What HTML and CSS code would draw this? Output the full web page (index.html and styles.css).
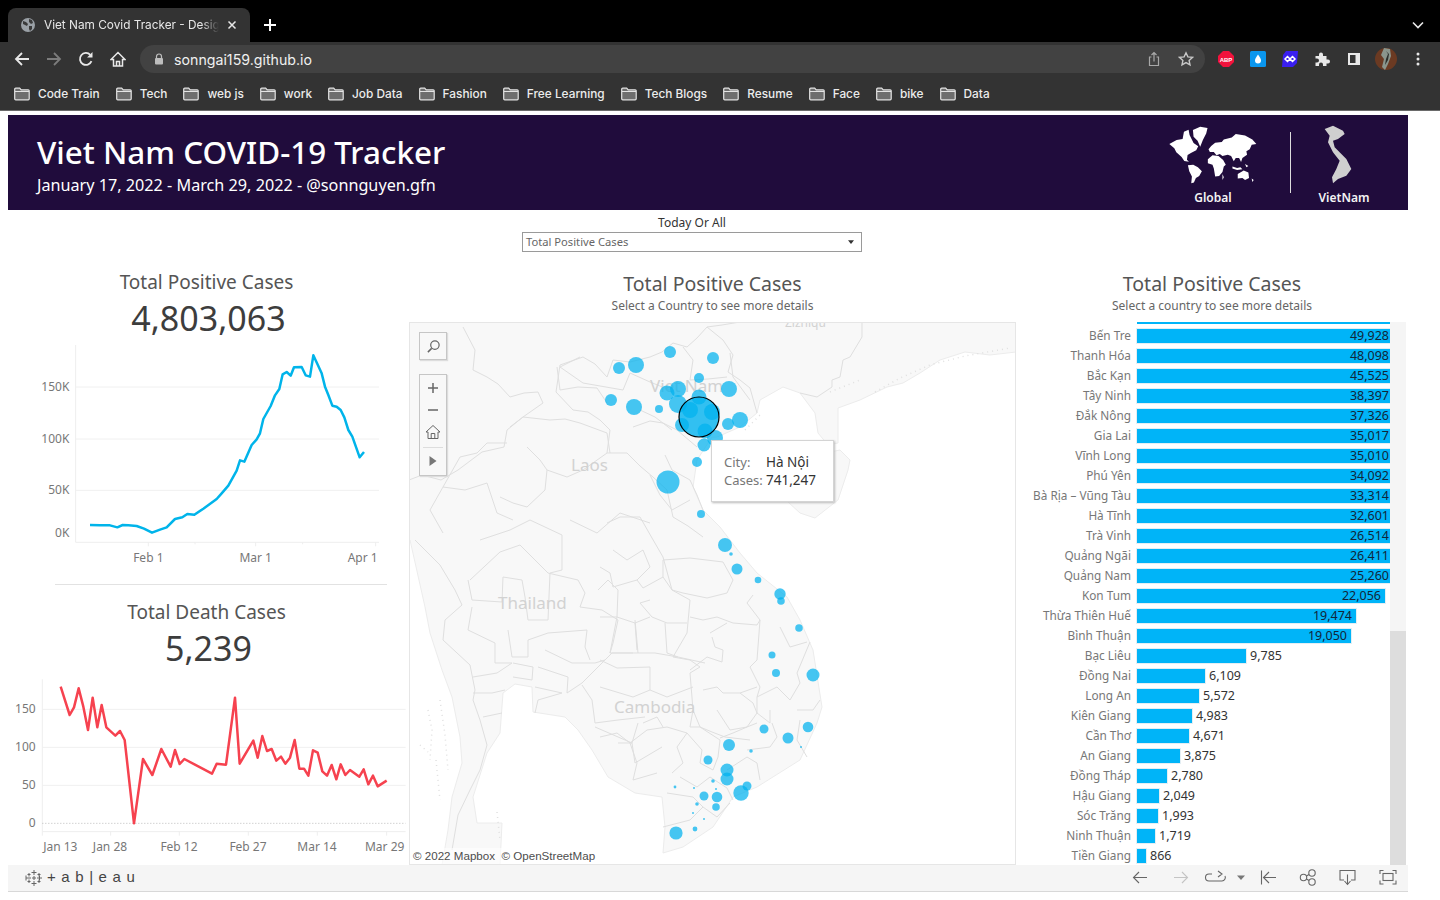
FILE: index.html
```html
<!DOCTYPE html>
<html lang="en">
<head>
<meta charset="utf-8">
<title>Viet Nam Covid Tracker</title>
<link rel="stylesheet" href="styles.css">
</head>
<body>
<header class="chrome">
  <div class="tabstrip">
    <div class="tab">
      <svg class="tab-globe" viewBox="0 0 16 16"><circle cx="8" cy="8" r="7" fill="#9aa0a6"/><path d="M3 4l3 1 2 2-1 2-2-1-2-1zM9 2l3 1 1 3-2 1-2-2zM9 9l3 0 0 3-2 2-1-2z" fill="#3a3a3a"/></svg>
      <span class="tab-title">Viet Nam Covid Tracker - Design</span>
      <svg class="tab-x" viewBox="0 0 10 10"><path d="M1.5 1.5l7 7M8.5 1.5l-7 7" stroke="#e8e8e8" stroke-width="1.5"/></svg>
    </div>
    <svg class="newtab" viewBox="0 0 14 14"><path d="M7 1v12M1 7h12" stroke="#fff" stroke-width="2"/></svg>
    <svg class="tabmenu" viewBox="0 0 12 8"><path d="M1 1.5l5 5 5-5" fill="none" stroke="#e8e8e8" stroke-width="1.6"/></svg>
  </div>
  <div class="toolbar">
    <span class="navbtn"><svg viewBox="0 0 16 16"><path d="M15 8H2M8 2L2 8l6 6" fill="none" stroke="#e8e8e8" stroke-width="1.8"/></svg></span>
    <span class="navbtn"><svg viewBox="0 0 16 16"><path d="M1 8h13M8 2l6 6-6 6" fill="none" stroke="#7c7c7c" stroke-width="1.8"/></svg></span>
    <span class="navbtn"><svg viewBox="0 0 16 16"><path d="M13.5 10.2A6 6 0 1 1 12.3 3.8" fill="none" stroke="#e8e8e8" stroke-width="1.8"/><path d="M14.5 1v5.4H9.1z" fill="#e8e8e8"/></svg></span>
    <span class="navbtn"><svg viewBox="0 0 16 16"><path d="M8 1.500L1 8.500h2.500V15h9V8.500H15zM6.500 15v-4.500h3V15" fill="none" stroke="#e8e8e8" stroke-width="1.500"/></svg></span>
    <div class="omnibox">
      <svg class="lock" viewBox="0 0 10 12"><path d="M2.500 5V3.500a2.500 2.500 0 0 1 5 0V5" fill="none" stroke="#bdbdbd" stroke-width="1.200"/><rect x="1" y="5" width="8" height="6.500" rx="1" fill="#bdbdbd"/></svg>
      <span class="url">sonngai159.github.io</span>
      <svg class="omni-share" viewBox="0 0 12 16"><path d="M3.500 6H1.500v8.500h9V6H8.500M6 10.500V1.500M3.500 4L6 1.500 8.500 4" fill="none" stroke="#a8a8a8" stroke-width="1.200"/></svg>
      <svg class="omni-star" viewBox="0 0 16 16"><path d="M8 1.800l1.900 4.100 4.500.500-3.300 3 .9 4.400L8 11.600l-4 2.200.9-4.400-3.300-3 4.500-.500z" fill="none" stroke="#c8c8c8" stroke-width="1.400"/></svg>
    </div>
    <div class="extensions">
      <span class="navbtn"><svg viewBox="0 0 16 16"><path d="M5 0h6l5 5v6l-5 5H5l-5-5V5z" fill="#f2123c"/><text x="8" y="10.500" class="abp">ABP</text></svg></span>
      <span class="navbtn"><svg viewBox="0 0 16 16"><rect width="16" height="16" rx="1.500" fill="#0a96ee"/><path d="M8 3.500c2 3 3 4.500 3 6a3 3 0 0 1-6 0c0-1.500 1-3 3-6z" fill="#fff"/></svg></span>
      <span class="navbtn"><svg viewBox="0 0 16 16"><path d="M4 0h12l-1 12-4 4H0l1-12z" fill="#3a1ff0"/><path d="M3 8l2.500-2.500L8 8l2.500 2.500L13 8l-2.500-2.500L8 8l-2.500 2.500z" fill="none" stroke="#fff" stroke-width="1.500"/></svg></span>
      <span class="navbtn"><svg viewBox="0 0 16 16"><path d="M1.500 5H5V3.500a2 2 0 0 1 4 0V5h3.500v3.500H14a2 2 0 0 1 0 4h-1.500V15H9v-1.500a2 2 0 0 0-4 0V15H1.500v-3.500H3a2 2 0 0 0 0-4H1.500z" fill="#e8e8e8"/></svg></span>
      <span class="navbtn"><svg viewBox="0 0 16 16"><path d="M2 2h12v12H2z" fill="#e8e8e8"/><path d="M4 4h5.500v8H4z" fill="#333"/></svg></span>
      <span class="navbtn"><svg class="avatar" viewBox="0 0 22 22"><circle cx="11" cy="11" r="11" fill="#6b3a22"/><path d="M9 0l6 1 1 7-3 8-3 6-3-3 2-8-3-4z" fill="#8a958c"/><path d="M11 3l2 3-2 5-1 6 3-5 1-6z" fill="#2b2f2b"/></svg></span>
      <span class="navbtn"><svg viewBox="0 0 16 16"><circle cx="8" cy="3" r="1.500" fill="#e8e8e8"/><circle cx="8" cy="8" r="1.500" fill="#e8e8e8"/><circle cx="8" cy="13" r="1.500" fill="#e8e8e8"/></svg></span>
    </div>
  </div>
  <nav class="bookmarks">
    <a class="bm"><svg class="folder" viewBox="0 0 16 14"><path d="M.7 2.200A1 1 0 0 1 1.700 1.200h4l1.500 1.600h7a1 1 0 0 1 1 1v8a1 1 0 0 1-1 1H1.700a1 1 0 0 1-1-1z" fill="#6e6e6e" stroke="#e4e4e4" stroke-width="1.200"/><path d="M1 4.500h14" stroke="#e4e4e4"/></svg>Code Train</a>
    <a class="bm"><svg class="folder" viewBox="0 0 16 14"><path d="M.7 2.200A1 1 0 0 1 1.700 1.200h4l1.500 1.600h7a1 1 0 0 1 1 1v8a1 1 0 0 1-1 1H1.700a1 1 0 0 1-1-1z" fill="#6e6e6e" stroke="#e4e4e4" stroke-width="1.200"/><path d="M1 4.500h14" stroke="#e4e4e4"/></svg>Tech</a>
    <a class="bm"><svg class="folder" viewBox="0 0 16 14"><path d="M.7 2.200A1 1 0 0 1 1.700 1.200h4l1.500 1.600h7a1 1 0 0 1 1 1v8a1 1 0 0 1-1 1H1.700a1 1 0 0 1-1-1z" fill="#6e6e6e" stroke="#e4e4e4" stroke-width="1.200"/><path d="M1 4.500h14" stroke="#e4e4e4"/></svg>web js</a>
    <a class="bm"><svg class="folder" viewBox="0 0 16 14"><path d="M.7 2.200A1 1 0 0 1 1.700 1.200h4l1.500 1.600h7a1 1 0 0 1 1 1v8a1 1 0 0 1-1 1H1.700a1 1 0 0 1-1-1z" fill="#6e6e6e" stroke="#e4e4e4" stroke-width="1.200"/><path d="M1 4.500h14" stroke="#e4e4e4"/></svg>work</a>
    <a class="bm"><svg class="folder" viewBox="0 0 16 14"><path d="M.7 2.200A1 1 0 0 1 1.700 1.200h4l1.500 1.600h7a1 1 0 0 1 1 1v8a1 1 0 0 1-1 1H1.700a1 1 0 0 1-1-1z" fill="#6e6e6e" stroke="#e4e4e4" stroke-width="1.200"/><path d="M1 4.500h14" stroke="#e4e4e4"/></svg>Job Data</a>
    <a class="bm"><svg class="folder" viewBox="0 0 16 14"><path d="M.7 2.200A1 1 0 0 1 1.700 1.200h4l1.500 1.600h7a1 1 0 0 1 1 1v8a1 1 0 0 1-1 1H1.700a1 1 0 0 1-1-1z" fill="#6e6e6e" stroke="#e4e4e4" stroke-width="1.200"/><path d="M1 4.500h14" stroke="#e4e4e4"/></svg>Fashion</a>
    <a class="bm"><svg class="folder" viewBox="0 0 16 14"><path d="M.7 2.200A1 1 0 0 1 1.700 1.200h4l1.500 1.600h7a1 1 0 0 1 1 1v8a1 1 0 0 1-1 1H1.700a1 1 0 0 1-1-1z" fill="#6e6e6e" stroke="#e4e4e4" stroke-width="1.200"/><path d="M1 4.500h14" stroke="#e4e4e4"/></svg>Free Learning</a>
    <a class="bm"><svg class="folder" viewBox="0 0 16 14"><path d="M.7 2.200A1 1 0 0 1 1.700 1.200h4l1.500 1.600h7a1 1 0 0 1 1 1v8a1 1 0 0 1-1 1H1.700a1 1 0 0 1-1-1z" fill="#6e6e6e" stroke="#e4e4e4" stroke-width="1.200"/><path d="M1 4.500h14" stroke="#e4e4e4"/></svg>Tech Blogs</a>
    <a class="bm"><svg class="folder" viewBox="0 0 16 14"><path d="M.7 2.200A1 1 0 0 1 1.700 1.200h4l1.500 1.600h7a1 1 0 0 1 1 1v8a1 1 0 0 1-1 1H1.700a1 1 0 0 1-1-1z" fill="#6e6e6e" stroke="#e4e4e4" stroke-width="1.200"/><path d="M1 4.500h14" stroke="#e4e4e4"/></svg>Resume</a>
    <a class="bm"><svg class="folder" viewBox="0 0 16 14"><path d="M.7 2.200A1 1 0 0 1 1.700 1.200h4l1.500 1.600h7a1 1 0 0 1 1 1v8a1 1 0 0 1-1 1H1.700a1 1 0 0 1-1-1z" fill="#6e6e6e" stroke="#e4e4e4" stroke-width="1.200"/><path d="M1 4.500h14" stroke="#e4e4e4"/></svg>Face</a>
    <a class="bm"><svg class="folder" viewBox="0 0 16 14"><path d="M.7 2.200A1 1 0 0 1 1.700 1.200h4l1.500 1.600h7a1 1 0 0 1 1 1v8a1 1 0 0 1-1 1H1.700a1 1 0 0 1-1-1z" fill="#6e6e6e" stroke="#e4e4e4" stroke-width="1.200"/><path d="M1 4.500h14" stroke="#e4e4e4"/></svg>bike</a>
    <a class="bm"><svg class="folder" viewBox="0 0 16 14"><path d="M.7 2.200A1 1 0 0 1 1.700 1.200h4l1.500 1.600h7a1 1 0 0 1 1 1v8a1 1 0 0 1-1 1H1.700a1 1 0 0 1-1-1z" fill="#6e6e6e" stroke="#e4e4e4" stroke-width="1.200"/><path d="M1 4.500h14" stroke="#e4e4e4"/></svg>Data</a>
  </nav>
</header>

<main class="dash">
  <section class="banner">
    <div class="banner-text">
      <h1 class="banner-title">Viet Nam COVID-19 Tracker</h1>
      <p class="banner-sub">January 17, 2022 - March 29, 2022 - @sonnguyen.gfn</p>
    </div>
    <div class="banner-nav">
      <div class="nav-item nav-global">
        <svg class="world" viewBox="205 40 280 180">
          <path d="M212 100l22-12 18-3 4-22 14-6 3 16 12 24 14 10-6 12-16 8-10 6-2 14 6 6-14-2-8-12-16-14-6-12z" fill="#fff"/>
          <path d="M283 58l22-10 22 4-4 16-10 20-8 20-8-18-12-12z" fill="#fff"/>
          <path d="M268 164l16-2 14 8 12 12-8 14-10 6-6 14-8 2 2-20-8-16z" fill="#fff"/>
          <path d="M328 146l14-12 18 2 14 12 8 14-6 6-4 16-10 12-12 2-4-24-4-12-14-4z" fill="#fff"/>
          <path d="M338 106l12-10 20-2 6-8 24-6 12-10 28 4 22 12 12 14-14 2-6 14-10 6 2 10-14 10-4 12-6-12-10 0-6 10-8-16-10-4-16 4-8-6-10 4-8-10-12 0-4-8z" fill="#fff"/>
          <path d="M418 190l18-10 14 6 2 16-12 6-8-6-14 2z" fill="#fff"/>
          <path d="M402 168l14 4 10-2 6 6-16 2-14-4z M440 160l10 6-6 4z M460 204l6 4-4 6z M372 190l4 10-4 8z" fill="#fff"/>
        </svg>
        <span class="nav-label">Global</span>
      </div>
      <div class="nav-rule"></div>
      <div class="nav-item nav-vn">
        <svg class="vnshape" viewBox="670 40 90 180">
          <path d="M675 55L700 45 730 60 735 70 715 85 700 90 705 110 740 145 755 175 740 195 715 205 700 218 697 200 710 175 720 150 700 125 685 95 690 75Z" fill="#cfcfcf"/>
        </svg>
        <span class="nav-label">VietNam</span>
      </div>
    </div>
  </section>

  <section class="filter">
    <label class="filter-label">Today Or All</label>
    <div class="filter-box">
      <span>Total Positive Cases</span>
      <svg class="filter-caret" viewBox="0 0 8 5"><path d="M0 0h8L4 5z" fill="#333"/></svg>
    </div>
  </section>

  <section class="columns">
    <div class="col-left">
      <h2 class="kpi-title">Total Positive Cases</h2>
      <div class="kpi-value">4,803,063</div>
      <svg class="chart chart-cases" viewBox="24 0 1203 720">
        <path class="grid" d="M227 141H1137M227 297H1137M227 451H1137"/>
        <path class="axis" d="M227 15V607H1137M445 607v12M585 607v6M767 607v12M908 607v6M1127 607v12"/>
        <polyline class="line-blue" points="270,555 300,556 330,556 352,562 368,555 385,556 410,558 432,566 456,578 480,569 500,562 525,537 547,532 562,522 583,524 610,506 650,477 665,460 685,437 710,392 720,361 733,365 755,315 770,298 780,280 790,237 812,198 825,166 838,147 848,103 860,96 872,107 882,82 905,81 917,106 930,110 940,46 965,100 975,140 985,165 997,197 1010,200 1022,210 1033,232 1045,270 1057,290 1079,352 1092,336"/>
        <text class="tick end" x="208" y="153">150K</text>
        <text class="tick end" x="208" y="310">100K</text>
        <text class="tick end" x="208" y="463">50K</text>
        <text class="tick end" x="208" y="590">0K</text>
        <text class="tick mid" x="445" y="667">Feb 1</text>
        <text class="tick mid" x="767" y="667">Mar 1</text>
        <text class="tick mid" x="1088" y="667">Apr 1</text>
      </svg>
      <div class="divider"></div>
      <h2 class="kpi-title kpi-second">Total Death Cases</h2>
      <div class="kpi-value">5,239</div>
      <svg class="chart chart-deaths" viewBox="24 0 1203 585">
        <path class="grid" d="M127 118H1217M127 232H1217M127 346H1217"/>
        <path class="axis" d="M127 28V485H1217M127 485v12M332 485v12M538 485v12M745 485v12M952 485v12M1160 485v12"/>
        <path class="zero" d="M127 460H1217"/>
        <polyline class="line-red" points="182,50 209,135 222,112 236,55 250,110 264,180 278,83 292,172 305,105 319,172 346,197 360,183 374,210 402,460 429,267 457,315 484,237 512,290 525,240 539,282 553,267 636,311 650,281 678,284 705,83 719,281 760,212 773,263 787,198 801,243 815,237 829,272 843,260 856,281 870,263 884,210 898,296 912,296 925,317 939,241 953,248 967,304 981,317 995,285 1009,328 1022,283 1036,315 1050,300 1078,320 1091,298 1105,343 1119,317 1133,349 1160,332"/>
        <text class="tick end" x="107" y="130">150</text>
        <text class="tick end" x="107" y="244">100</text>
        <text class="tick end" x="107" y="358">50</text>
        <text class="tick end" x="107" y="470">0</text>
        <text class="tick mid" x="181" y="543">Jan 13</text>
        <text class="tick mid" x="330" y="543">Jan 28</text>
        <text class="tick mid" x="537" y="543">Feb 12</text>
        <text class="tick mid" x="744" y="543">Feb 27</text>
        <text class="tick mid" x="951" y="543">Mar 14</text>
        <text class="tick mid" x="1154" y="543">Mar 29</text>
      </svg>
    </div>

    <div class="col-map">
      <h2 class="section-title">Total Positive Cases</h2>
      <p class="section-sub">Select a Country to see more details</p>
      <div class="map">
        <svg class="map-svg" viewBox="409 322 607 543">
          <path class="land" d="M409 322H1016V352L990 355 965 352 940 360 920 373 903 383 887 387 860 400 838 408 838 443 828 445 818 433 815 413 800 393 783 387 760 400 757 413 740 427 717 437 712 437 697 460 693 487 703 510 720 527 740 553 757 573 787 597 800 620 813 650 822 707 817 723 800 760 757 787 733 797 713 827 683 847 663 853 665 827 662 797 635 793 608 777 592 750 578 730 565 717 533 712 532 687 515 684 503 693 500 733 487 753 473 797 477 823 502 823 500 865 442 865 448 830 452 797 462 763 460 737 452 697 442 670 430 633 425 607 410 540 409 540Z"/>
          <path class="land" d="M788 502L800 513 815 518 838 500 848 470 850 460 840 450 825 453 800 470Z"/>
          <path class="border" d="M463 327L475 350 473 370 487 377 498 384 510 397 524 393 538 392 543 403 523 417 507 430 504 447 482 452 458 470 441 480 422 475 409 480"/>
          <path class="border" d="M583 357L595 364 607 377 613 360 630 362 650 357 662 352 673 343 687 347 697 338 707 327 723 340 733 355 728 372 740 380 750 388 757 413"/>
          <path class="border" d="M583 357L560 365 556 392 573 410 588 412 600 420 610 430 607 453 627 453 640 466 653 477 667 490 673 517 688 526 703 537"/>
          <path class="border" d="M640 517L652 538 663 557 672 590 690 600 687 633 680 645 673 657 690 660 700 667 690 673 693 710 700 727 712 732 725 737 750 740"/>
          <path class="border" d="M862 323L862 337 850 357 843 360 840 377 832 380 832 387 817 397 800 393M707 327L722 325 740 322"/>
          <path class="border" d="M557 367L560 390 578 387 597 388 607 403M510 427L523 417 550 420 565 419 580 423 607 433 610 453M507 443L487 443 477 453 460 457 443 487 430 510 443 533M527 447L540 460 547 470 545 490 527 507 513 503 500 497M547 470L567 477 583 470 607 453M487 483L497 513 513 520M443 487L465 490 487 483M570 520L597 533 620 513 635 518 650 523"/>
          <path class="border" d="M580 357L560 367 583 383 623 390 630 373 650 382 670 390M633 427L650 421 663 423 677 430 697 447M683 347L693 360 690 380 708 379 727 377M730 353L733 377 750 400M640 410L655 417 672 430M665 455L672 470 690 480M650 475L660 495 672 510 690 500M690 480L697 495 703 510"/>
          <path class="border" d="M663 560L690 558 723 562 733 580 727 593 707 598 683 593 672 590 663 577 663 560M690 617L703 620 717 617 733 623 757 625 760 620 747 603 753 595M710 633L727 623M712 637L715 647 723 650 722 662 707 657 690 670M760 620L757 660 750 667 760 687 757 697 777 687 790 700 800 683 797 673 810 642M780 627L790 647 807 642"/>
          <path class="border" d="M757 697L757 713 770 723 770 710M797 710L813 710 820 700M800 720L797 740 807 757M772 723L777 737 770 747 747 750M720 738L733 733 747 727 757 723M693 710L690 727 700 727 720 740 718 757 713 770 700 763 702 750 687 733 677 747 683 763 672 773M630 743L647 730 667 727 687 733M600 737L617 733 630 743 637 763 633 780 657 773M643 723L657 717 663 727"/>
          <path class="border" d="M600 687L633 697 650 690 650 667 617 668 600 660M650 690L667 697 693 687M703 690L717 687 723 693 740 693 757 687M717 710L730 730 747 727 757 713 753 703 740 693M727 770L747 757 757 763 760 780M680 777L697 787 710 777 727 788 733 800M667 793L693 797 703 807 690 820 663 827M703 807L717 817 730 803"/>
          <path class="border" d="M607 523L620 517 640 517M613 550L627 560 643 550 650 567 637 580 643 588 663 577M600 567L610 573 613 587 630 582 637 580M650 600L640 603 652 617 667 623 687 623M617 617L610 653 633 653M635 623L637 650M600 617L617 617 635 623 650 617M582 683L602 663 612 653 633 653 655 653 678 657 705 663"/>
          <path class="border" d="M415 540L440 565 455 590 462 605 445 620 443 640 470 665 475 690 473 700 480 720 487 745 480 770 470 790 458 815 452 850"/>
          <path class="border" d="M468 580L472 600 502 602 503 577 522 580 525 597 528 620 548 620M548 573L578 580 585 593 580 607 602 610 618 620 613 643 610 653M548 620L550 573 562 570M598 590L608 580 618 590 617 617M635 620L638 653M665 623L667 653 678 657M472 607L468 630 495 643 495 663 512 663M508 630L512 657 528 657 528 640 548 633 587 630 585 647 590 660"/>
          <path class="border" d="M545 650L572 663 595 663 605 660M513 663L533 667 532 680 513 677M538 667L568 677 567 693 582 683M535 687L562 693 538 700 535 713M473 677L497 673 512 663M473 693L492 693 505 690M483 717L502 713M582 685L592 700 595 723 618 720 645 717M595 727L632 743 638 723M618 743L632 743 635 763 662 747M470 580L500 552 520 545 548 573M480 540L510 530 530 520 562 535 562 570"/>
          <path class="speck" d="M428 710L432 730 430 760M440 700L445 735 448 770M436 760L440 800M420 745L428 752M497 812L500 840M875 392L900 378 930 365 965 356 1010 348M830 392L860 380M745 430L760 415"/>
          <text class="map-name" x="650" y="392">Viet Nam</text>
          <text class="map-name" x="571" y="471">Laos</text>
          <text class="map-name" x="498" y="609">Thailand</text>
          <text class="map-name" x="614" y="713">Cambodia</text>
          <text class="map-name map-name-sm" x="785" y="327">Zizhiqu</text>
          <g class="dots">
            <circle cx="670" cy="352" r="6"/><circle cx="713" cy="358" r="6"/><circle cx="636" cy="365" r="8"/><circle cx="619" cy="368" r="6"/>
            <circle cx="699" cy="378" r="5"/><circle cx="729" cy="389" r="8"/><circle cx="678" cy="389" r="8"/><circle cx="667" cy="393" r="7.500"/>
            <circle cx="699" cy="397" r="7.500"/><circle cx="611" cy="400" r="6"/><circle cx="634" cy="407" r="8"/><circle cx="678" cy="404" r="9"/>
            <circle cx="659" cy="409" r="4"/><circle cx="740" cy="420" r="8"/><circle cx="728" cy="424" r="6"/><circle cx="682" cy="425" r="7"/>
            <circle cx="715" cy="438" r="8"/><circle cx="704" cy="445" r="6.500"/><circle cx="697" cy="462" r="5"/><circle cx="668" cy="482" r="11.500"/>
            <circle cx="701" cy="514" r="4"/><circle cx="725" cy="545" r="7"/><circle cx="731" cy="554" r="1.800"/><circle cx="737" cy="569" r="5.500"/>
            <circle cx="758" cy="580" r="3.300"/><circle cx="780" cy="594" r="5.700"/><circle cx="781" cy="601" r="3.800"/><circle cx="799" cy="628" r="3.800"/>
            <circle cx="772" cy="655" r="3.500"/><circle cx="776" cy="673" r="4"/><circle cx="813" cy="675" r="6.500"/><circle cx="764" cy="729" r="4.500"/>
            <circle cx="808" cy="727" r="5.300"/><circle cx="788" cy="738" r="5.500"/><circle cx="729" cy="745" r="6"/><circle cx="751" cy="751" r="1.800"/>
            <circle cx="801" cy="747" r="1"/><circle cx="708" cy="760" r="4.500"/><circle cx="727" cy="770" r="6.500"/><circle cx="727" cy="779" r="6.500"/>
            <circle cx="713" cy="781" r="1.800"/><circle cx="675" cy="787" r="1.400"/><circle cx="694" cy="788" r="1"/><circle cx="747" cy="786" r="4.500"/>
            <circle cx="741" cy="793" r="7.700"/><circle cx="716" cy="789" r="1"/><circle cx="704" cy="796" r="4.500"/><circle cx="717" cy="797" r="5.300"/>
            <circle cx="697" cy="804" r="1.800"/><circle cx="716" cy="807" r="3.800"/><circle cx="693" cy="813" r="1"/><circle cx="704" cy="819" r="1"/>
            <circle cx="695" cy="829" r="2.400"/><circle cx="676" cy="833" r="6.600"/>
            <circle cx="690" cy="410" r="8"/><circle cx="712" cy="412" r="8"/><circle cx="705" cy="431" r="7.500"/>
          </g>
          <circle class="dot-selected" cx="699" cy="417" r="20"/>
        </svg>
        <div class="map-tools">
          <button class="tool-box tool-search" type="button"><svg viewBox="0 0 16 16"><circle cx="9.500" cy="6.500" r="4.500" fill="none" stroke="#666" stroke-width="1.300"/><path d="M6 10l-4 4" stroke="#666" stroke-width="1.600"/></svg></button>
          <div class="tool-box tool-zoom">
            <svg class="tool-ico" viewBox="0 0 12 12"><path d="M6 1v10M1 6h10" stroke="#666" stroke-width="1.500"/></svg>
            <svg class="tool-ico tool-minus" viewBox="0 0 12 12"><path d="M1 6h10" stroke="#666" stroke-width="1.500"/></svg>
            <svg class="tool-ico tool-home" viewBox="0 0 16 16"><path d="M8 1.500L1 8h2v6.500h10V8h2zM6.200 14.500v-5h3.600v5" fill="none" stroke="#666"/></svg>
            <span class="tool-sep"></span>
            <svg class="tool-ico" viewBox="0 0 12 12"><path d="M2.500 1l7 5-7 5z" fill="#777"/></svg>
          </div>
        </div>
        <div class="tooltip">
          <span class="tt-key">City:</span><span class="tt-val">Hà Nội</span>
          <span class="tt-key">Cases:</span><span class="tt-val">741,247</span>
        </div>
        <div class="copyright">© 2022 Mapbox&nbsp; © OpenStreetMap</div>
      </div>
    </div>

    <div class="col-bars">
      <h2 class="section-title">Total Positive Cases</h2>
      <p class="section-sub">Select a country to see more details</p>
      <div class="barlist">
        <div class="rows">
          <div class="row-cut"></div>
          <div class="row"><span class="row-name">Bến Tre</span><div class="bar in clip" style="width:253px">49,928</div></div>
          <div class="row"><span class="row-name">Thanh Hóa</span><div class="bar in clip" style="width:253px">48,098</div></div>
          <div class="row"><span class="row-name">Bắc Kạn</span><div class="bar in clip" style="width:253px">45,525</div></div>
          <div class="row"><span class="row-name">Tây Ninh</span><div class="bar in clip" style="width:253px">38,397</div></div>
          <div class="row"><span class="row-name">Đắk Nông</span><div class="bar in clip" style="width:253px">37,326</div></div>
          <div class="row"><span class="row-name">Gia Lai</span><div class="bar in clip" style="width:253px">35,017</div></div>
          <div class="row"><span class="row-name">Vĩnh Long</span><div class="bar in clip" style="width:253px">35,010</div></div>
          <div class="row"><span class="row-name">Phú Yên</span><div class="bar in clip" style="width:253px">34,092</div></div>
          <div class="row"><span class="row-name">Bà Rịa – Vũng Tàu</span><div class="bar in clip" style="width:253px">33,314</div></div>
          <div class="row"><span class="row-name">Hà Tĩnh</span><div class="bar in clip" style="width:253px">32,601</div></div>
          <div class="row"><span class="row-name">Trà Vinh</span><div class="bar in clip" style="width:253px">26,514</div></div>
          <div class="row"><span class="row-name">Quảng Ngãi</span><div class="bar in clip" style="width:253px">26,411</div></div>
          <div class="row"><span class="row-name">Quảng Nam</span><div class="bar in clip" style="width:253px">25,260</div></div>
          <div class="row"><span class="row-name">Kon Tum</span><div class="bar in" style="width:248px">22,056</div></div>
          <div class="row"><span class="row-name">Thừa Thiên Huế</span><div class="bar in" style="width:219px">19,474</div></div>
          <div class="row"><span class="row-name">Bình Thuận</span><div class="bar in" style="width:214px">19,050</div></div>
          <div class="row"><span class="row-name">Bạc Liêu</span><div class="bar" style="width:109px"></div><span class="row-val">9,785</span></div>
          <div class="row"><span class="row-name">Đồng Nai</span><div class="bar" style="width:68px"></div><span class="row-val">6,109</span></div>
          <div class="row"><span class="row-name">Long An</span><div class="bar" style="width:62px"></div><span class="row-val">5,572</span></div>
          <div class="row"><span class="row-name">Kiên Giang</span><div class="bar" style="width:55px"></div><span class="row-val">4,983</span></div>
          <div class="row"><span class="row-name">Cần Thơ</span><div class="bar" style="width:52px"></div><span class="row-val">4,671</span></div>
          <div class="row"><span class="row-name">An Giang</span><div class="bar" style="width:43px"></div><span class="row-val">3,875</span></div>
          <div class="row"><span class="row-name">Đồng Tháp</span><div class="bar" style="width:30px"></div><span class="row-val">2,780</span></div>
          <div class="row"><span class="row-name">Hậu Giang</span><div class="bar" style="width:22px"></div><span class="row-val">2,049</span></div>
          <div class="row"><span class="row-name">Sóc Trăng</span><div class="bar" style="width:21px"></div><span class="row-val">1,993</span></div>
          <div class="row"><span class="row-name">Ninh Thuận</span><div class="bar" style="width:18px"></div><span class="row-val">1,719</span></div>
          <div class="row"><span class="row-name">Tiền Giang</span><div class="bar" style="width:9px"></div><span class="row-val">866</span></div>
        </div>
        <div class="scrollbar"><div class="scroll-thumb"></div></div>
      </div>
    </div>
  </section>

  <footer class="tb-footer">
    <div class="tb-logo">
      <svg class="tb-mark" viewBox="0 0 18 18"><path d="M9 1v5M6.500 3.500h5M9 12v5M6.500 14.500h5M1 9h5M1 6.500v5M12 9h5M14.500 6.500v5M4 4v3.500M2.500 5.500h3M14 4v3.500M12.500 5.500h3M4 10.500V14M2.500 12.500h3M14 10.500V14M12.500 12.500h3M9 7v4M7 9h4" stroke="#666" fill="none"/></svg>
      <span class="tb-word">+ a b | e a u</span>
    </div>
    <svg class="tb-tools" viewBox="1130 0 268 26">
      <path class="tb-ico" d="M1147 12.500h-13M1139 7l-5.500 5.500 5.500 5.500"/>
      <path class="tb-ico off" d="M1174 12.500h13M1182 7l5.500 5.500-5.500 5.500"/>
      <path class="tb-ico" d="M1212 9h-3a3.500 3.500 0 0 0 0 7h13a3.500 3.500 0 0 0 3-5M1218 6l4 3-4 3"/>
      <path d="M1237 10.500h8l-4 4.500z" fill="#777"/>
      <path class="tb-ico" d="M1261.500 5.500v14M1276 12.500h-12.500M1269 7l-5.500 5.500 5.500 5.500"/>
      <circle class="tb-ico" cx="1303.500" cy="12.500" r="3.200"/><circle class="tb-ico" cx="1312" cy="8" r="3.200"/><circle class="tb-ico" cx="1312" cy="17" r="3.200"/>
      <path class="tb-ico" d="M1306.500 11l2.500-1.500M1306.500 14l2.500 1.500"/>
      <path class="tb-ico" d="M1344 15h-4V5.500h15V15h-4M1347.500 9.500V19M1344.500 16l3 3.500 3-3.500"/>
      <path class="tb-ico" d="M1380 9V5.500h3.500M1392.500 5.500h3.500V9M1396 15.500V19h-3.500M1383.500 19H1380v-3.500"/><rect class="tb-ico" x="1383" y="8.500" width="10" height="7"/>
    </svg>
  </footer>
</main>
</body>
</html>
```

FILE: styles.css
```css
* { box-sizing: border-box; }
html, body { margin: 0; padding: 0; }
body {
  width: 1440px;
  height: 900px;
  overflow: hidden;
  background: #fff;
  font-family: "Noto Sans", "Open Sans", sans-serif;
  color: #333;
}
h1, h2, p { margin: 0; font-weight: 400; }

/* browser chrome */
.chrome { height: 111px; background: #333; border-bottom: 1px solid #6a6a6a; font-family: Inter, Roboto, sans-serif; }
.tabstrip { height: 42px; background: #000; display: flex; align-items: flex-end; position: relative; padding-left: 8px; }
.tab { width: 242px; height: 34px; background: #333; border-radius: 8px 8px 0 0; display: flex; align-items: center; padding-left: 12px; }
.tab-globe { width: 16px; height: 16px; flex: none; }
.tab-title {
  margin-left: 8px; width: 175px; flex: none; overflow: hidden; white-space: nowrap;
  color: #e8e8e8; font-size: 11.8px; line-height: 16px;
  -webkit-mask-image: linear-gradient(to right, #000 90%, transparent 100%);
  mask-image: linear-gradient(to right, #000 90%, transparent 100%);
}
.tab-x { width: 10px; height: 10px; margin-left: 8px; flex: none; }
.newtab { width: 14px; height: 14px; margin: 0 0 10px 13px; }
.tabmenu { width: 12px; height: 8px; margin: 0 0 13px auto; position: relative; right: 16px; }
.toolbar { height: 34px; display: flex; align-items: center; padding-left: 6px; }
.navbtn { width: 32px; height: 28px; flex: none; display: flex; align-items: center; justify-content: center; }
.navbtn svg { width: 16px; height: 16px; }
.navbtn svg.avatar { width: 22px; height: 22px; }
.omnibox {
  width: 1065px; height: 28px; margin-left: 6px; background: #424242; border-radius: 14px;
  display: flex; align-items: center; padding-left: 14px; flex: none;
}
.lock { width: 10px; height: 12px; flex: none; }
.url { margin-left: 10px; color: #f0f0f0; font-size: 14.2px; }
.omni-share { width: 12px; height: 16px; margin-left: auto; }
.omni-star { width: 16px; height: 16px; margin: 0 11px 0 18px; }
.extensions { display: flex; margin-left: 5px; }
.abp { font-family: "Liberation Sans", sans-serif; font-size: 6px; font-weight: 700; fill: #fff; text-anchor: middle; }
.bookmarks { height: 34px; display: flex; align-items: center; padding: 1px 0 0 14px; gap: 16px; }
.bm { display: flex; align-items: center; color: #ececec; font-size: 11.85px; font-weight: 500; white-space: nowrap; }
.folder { width: 16px; height: 14px; margin-right: 8px; flex: none; }

/* dashboard */
.dash { width: 1400px; margin: 4px 0 0 8px; }
.banner { height: 95px; background: #200c3c; display: flex; justify-content: space-between; color: #fff; }
.banner-text { padding: 16px 0 0 29px; }
.banner-title { font-size: 31.4px; line-height: 41px; font-weight: 500; white-space: nowrap; }
.banner-sub { font-size: 16.2px; line-height: 24px; margin-top: 1px; white-space: nowrap; }
.banner-nav { display: flex; align-items: flex-start; padding-right: 11px; }
.nav-item { display: flex; flex-direction: column; align-items: center; height: 95px; position: relative; }
.nav-global { width: 92px; padding-top: 9px; }
.nav-vn { width: 106px; padding-top: 9px; }
.world { width: 93px; height: 60px; flex: none; }
.vnshape { width: 30px; height: 60px; flex: none; margin-left: -12px; }
.nav-label { font-size: 12px; line-height: 16px; font-weight: 600; margin-top: 6px; color: #f4f4f4; }
.nav-rule { width: 1px; height: 61px; background: #ddd; margin: 17px 0 0 31px; }
.filter { height: 52px; margin-left: 514px; width: 340px; display: flex; flex-direction: column; align-items: center; }
.filter-label { font-size: 12px; line-height: 16px; margin-top: 5px; color: #333; }
.filter-box {
  width: 340px; height: 20px; margin-top: 1px; border: 1px solid #9a9a9a; padding: 0 7px 1px 3px;
  display: flex; align-items: center; justify-content: space-between; font-size: 11.2px; color: #666;
}
.filter-caret { width: 6px; height: 4px; }
.columns { display: grid; grid-template-columns: 401px 607px 392px; height: 603px; }
.col-left { display: flex; flex-direction: column; }
.kpi-title { font-size: 19px; line-height: 26px; text-align: center; color: #555; padding: 7px 4px 0 0; }
.kpi-second { padding-top: 0; margin-top: 14px; }
.kpi-value { font-size: 34px; line-height: 44px; text-align: center; color: #3d3d3d; margin-top: 1px; margin-bottom: 1px; }
.chart { display: block; width: 401px; flex: none; margin-top: -1px; }
.chart-cases { height: 240px; }
.chart-deaths { height: 195px; }
.divider { height: 1px; width: 332px; background: #e2e2e2; margin: 4px 0 0 47px; flex: none; }
.grid { stroke: #f0f0f0; stroke-width: 3; fill: none; }
.axis { stroke: #eee; stroke-width: 3; fill: none; }
.zero { stroke: #bbb; stroke-width: 3; stroke-dasharray: 3 6; fill: none; }
.line-blue { fill: none; stroke: #00b4ea; stroke-width: 7.500; stroke-linejoin: round; }
.line-red { fill: none; stroke: #f6424f; stroke-width: 7.500; stroke-linejoin: round; }
.tick { font-size: 36px; fill: #777; }
.end { text-anchor: end; }
.mid { text-anchor: middle; }

.section-title { font-size: 19.500px; line-height: 26px; text-align: center; color: #555; padding-top: 9px; box-sizing: content-box; }
.section-sub { font-size: 12px; line-height: 18px; text-align: center; color: #666; }

.map {
  width: 607px; height: 543px; margin-top: 7px; position: relative; overflow: hidden;
  border: 1px solid #e6e6e6;
}
.map-svg { display: block; width: 607px; height: 543px; margin: -1px 0 0 -1px; }
.land { fill: #f8f8f8; stroke: #ececec; stroke-width: 1; }
.border { fill: none; stroke: #dfdfdf; stroke-width: 1; stroke-linejoin: round; }
.speck { fill: none; stroke: #e0e0e0; stroke-width: 1.500; stroke-dasharray: 1 4; }
.map-name { font-size: 17px; fill: #d2d2d2; }
.map-name-sm { font-size: 12px; }
.dots circle { fill: #00b2ef; fill-opacity: 0.72; }
.dot-selected { fill: #00b2ef; fill-opacity: 0.8; stroke: #000; stroke-width: 1.200; }

.map-tools { position: absolute; left: 9px; top: 9px; display: flex; flex-direction: column; gap: 14px; }
.tool-box { width: 28px; background: #f8f8f8; border: 1px solid #c6c6c6; box-shadow: 1px 1px 1px #ddd; padding: 0; display: flex; flex-direction: column; align-items: center; }
.tool-search { height: 28px; justify-content: center; }
.tool-search svg { width: 15px; height: 15px; }
.tool-zoom { height: 102px; padding-top: 7px; }
.tool-ico { width: 12px; height: 12px; margin-bottom: 10px; flex: none; }
.tool-minus { margin-bottom: 8px; }
.tool-home { width: 16px; height: 16px; margin-bottom: 7px; }
.tool-sep { width: 20px; height: 1px; background: #ddd; margin-bottom: 7px; flex: none; }
.tooltip {
  position: absolute; left: 301px; top: 117px; width: 123px; height: 62px;
  background: #fff; border: 1px solid #d4d4d4; box-shadow: 1px 1px 2px #bbb;
  display: grid; grid-template-columns: 42px auto; align-content: center;
  padding-left: 12px; font-size: 13px; line-height: 18px;
}
.tt-key { color: #777; }
.tt-val { color: #333; font-size: 13.5px; }
.copyright {
  position: absolute; left: 1px; bottom: 0; padding: 0 2px; height: 16px; line-height: 16px;
  font-family: "Liberation Sans", sans-serif; font-size: 11.600px; color: #4d4d4d; background: rgba(255,255,255,.6);
}

.col-bars { display: flex; flex-direction: column; }
.barlist { display: flex; height: 543px; margin-top: 7px; overflow: hidden; }
.rows { width: 374px; flex: none; overflow: hidden; }
.row-cut { width: 253px; height: 2px; background: #00b4f8; margin: 0 0 2px 121px; }
.row { height: 20px; display: flex; align-items: center; font-size: 11.800px; }
.row-name { width: 115px; flex: none; text-align: right; color: #777; white-space: nowrap; margin: -2px 6px 0 0; }
.bar { height: 14px; background: #00b4f8; outline: 1px solid #e4eef3; flex: none; font-size: 12.500px; line-height: 13px; text-align: right; color: #10263a; }
.bar.in { padding-right: 4px; }
.bar.clip { padding-right: 1px; }
.row-val { margin: -2px 0 0 4px; color: #333; font-size: 12.500px; }
.scrollbar { width: 16px; height: 543px; flex: none; background: #f5f5f5; padding-top: 309px; }
.scroll-thumb { height: 234px; background: #ddd; }

.tb-footer {
  height: 27px; background: #f5f5f5; border-bottom: 1px solid #d8d8d8;
  display: flex; align-items: center; justify-content: space-between; padding: 0 10px 0 17px;
}
.tb-logo { display: flex; align-items: center; }
.tb-mark { width: 18px; height: 18px; flex: none; }
.tb-word { margin: -3px 0 0 4px; font-size: 15px; letter-spacing: 0.700px; color: #444; white-space: nowrap; font-family: "Liberation Sans", sans-serif; }
.tb-tools { width: 268px; height: 26px; flex: none; }
.tb-ico { fill: none; stroke: #666; stroke-width: 1.100; }
.tb-ico.off { stroke: #c4c4c4; }
```
